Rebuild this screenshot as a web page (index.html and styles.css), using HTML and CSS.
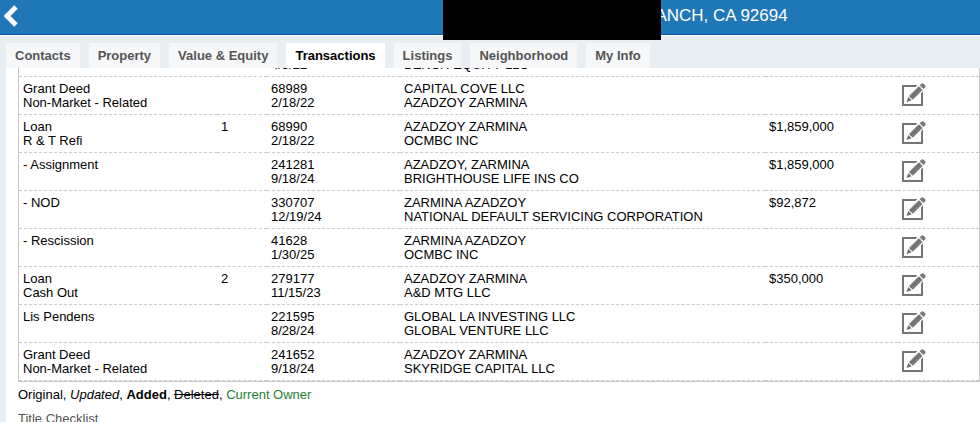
FILE: index.html
```html
<!DOCTYPE html>

<html lang="en">

  <head>

    <meta charset="utf-8">
    <title>Transactions</title>

    <link rel="stylesheet" href="styles.css">

  </head>

  <body>

    <!--ICON SHARED BY ALL THE ROWS-->

    <svg class="sprite" aria-hidden="true">
      <symbol id="edit" viewBox="0 0 25 24">
        <path d="M15 3 H1 V22 H20 V8" fill="none" stroke="#757575" stroke-width="2"/>
        <path d="M3.5 20.5 L6 12 L15.5 2 L22 7 L12 18.5 Z" fill="#fff"/>
        <path d="M4.5 19 L6.3 14 L9.6 17.3 Z" fill="#6b6b6b"/>
        <path d="M7 13 L16.8 3.2 L20.6 7 L10.8 16.8 Z" fill="#7b7b7b"/>
        <path d="M8.5 14.5 L18.5 4.7" stroke="#666" stroke-width="1"/>
        <path d="M17.7 2.3 L19.3 0.7 Q20.5 -0.3 21.8 0.9 L23 2.1 Q24 3.3 23 4.6 L21.5 6.1 Z" fill="#777"/>
      </symbol>
    </svg>

    <header class="topBar">
      <button class="backButton" aria-label="Back">
        <svg width="14" height="22" viewBox="0 0 14 22">
          <path d="M12 2 L3 11 L12 20" fill="none" stroke="#fff" stroke-width="5"/>
        </svg>
      </button>
      <div class="address">
        <span class="hiddenPart"></span>
        <span class="city">ANCH, CA 92694</span>
      </div>
    </header>

    <nav class="tabs">
      <a class="tab" href="#">Contacts</a>
      <a class="tab" href="#">Property</a>
      <a class="tab" href="#">Value &amp; Equity</a>
      <a class="tab activeTab" href="#">Transactions</a>
      <a class="tab" href="#">Listings</a>
      <a class="tab" href="#">Neighborhood</a>
      <a class="tab" href="#">My Info</a>
    </nav>

    <main class="content">

      <table class="transactions">
        <colgroup>
          <col class="typeCol">
          <col class="loanCol">
          <col class="docCol">
          <col>
          <col class="amountCol">
          <col class="editCol">
        </colgroup>
        <tbody>
          <tr>
            <td></td>
            <td></td>
            <td><br>4/5/22</td>
            <td><br>BENCH EQUITY LLC</td>
            <td></td>
            <td><button class="editButton" aria-label="Edit"><svg width="25" height="24"><use href="#edit"/></svg></button></td>
          </tr>
          <tr>
            <td>Grant Deed<br>Non-Market - Related</td>
            <td></td>
            <td>68989<br>2/18/22</td>
            <td>CAPITAL COVE LLC<br>AZADZOY ZARMINA</td>
            <td></td>
            <td><button class="editButton" aria-label="Edit"><svg width="25" height="24"><use href="#edit"/></svg></button></td>
          </tr>
          <tr>
            <td>Loan<br>R &amp; T Refi</td>
            <td>1</td>
            <td>68990<br>2/18/22</td>
            <td>AZADZOY ZARMINA<br>OCMBC INC</td>
            <td>$1,859,000</td>
            <td><button class="editButton" aria-label="Edit"><svg width="25" height="24"><use href="#edit"/></svg></button></td>
          </tr>
          <tr>
            <td>- Assignment</td>
            <td></td>
            <td>241281<br>9/18/24</td>
            <td>AZADZOY, ZARMINA<br>BRIGHTHOUSE LIFE INS CO</td>
            <td>$1,859,000</td>
            <td><button class="editButton" aria-label="Edit"><svg width="25" height="24"><use href="#edit"/></svg></button></td>
          </tr>
          <tr>
            <td>- NOD</td>
            <td></td>
            <td>330707<br>12/19/24</td>
            <td>ZARMINA AZADZOY<br>NATIONAL DEFAULT SERVICING CORPORATION</td>
            <td>$92,872</td>
            <td><button class="editButton" aria-label="Edit"><svg width="25" height="24"><use href="#edit"/></svg></button></td>
          </tr>
          <tr>
            <td>- Rescission</td>
            <td></td>
            <td>41628<br>1/30/25</td>
            <td>ZARMINA AZADZOY<br>OCMBC INC</td>
            <td></td>
            <td><button class="editButton" aria-label="Edit"><svg width="25" height="24"><use href="#edit"/></svg></button></td>
          </tr>
          <tr>
            <td>Loan<br>Cash Out</td>
            <td>2</td>
            <td>279177<br>11/15/23</td>
            <td>AZADZOY ZARMINA<br>A&amp;D MTG LLC</td>
            <td>$350,000</td>
            <td><button class="editButton" aria-label="Edit"><svg width="25" height="24"><use href="#edit"/></svg></button></td>
          </tr>
          <tr>
            <td>Lis Pendens</td>
            <td></td>
            <td>221595<br>8/28/24</td>
            <td>GLOBAL LA INVESTING LLC<br>GLOBAL VENTURE LLC</td>
            <td></td>
            <td><button class="editButton" aria-label="Edit"><svg width="25" height="24"><use href="#edit"/></svg></button></td>
          </tr>
          <tr>
            <td>Grant Deed<br>Non-Market - Related</td>
            <td></td>
            <td>241652<br>9/18/24</td>
            <td>AZADZOY ZARMINA<br>SKYRIDGE CAPITAL LLC</td>
            <td></td>
            <td><button class="editButton" aria-label="Edit"><svg width="25" height="24"><use href="#edit"/></svg></button></td>
          </tr>
        </tbody>
      </table>

      <p class="legend">Original, <em>Updated</em>, <strong>Added</strong>, <del>Deleted</del>, <span class="owner">Current Owner</span></p>

      <p class="checklist">Title Checklist</p>

    </main>

  </body>

</html>
```
FILE: styles.css
```css
* {
  box-sizing: border-box;
}

body {
  display: flex;
  flex-direction: column;
  height: 100vh;
  margin: 0;
  overflow: hidden;
  font-family: "Liberation Sans", Arial, Helvetica, sans-serif;
  font-size: 13px;
  line-height: 14px;
  color: black;
  background-color: #e9eef2;
}

.sprite {
  position: absolute;
  width: 0;
  height: 0;
}

/* Blue bar with the address */
.topBar {
  display: flex;
  flex: none;
  height: 36px;
  background-color: #1f77b8;
  border-bottom: 1px solid white;
  box-shadow: inset 0 -1px #0d5c9e;
}

.backButton {
  width: 22px;
  height: 31px;
  padding: 0 0 0 4px;
  border: none;
  background: none;
  cursor: pointer;
}

.backButton svg {
  display: block;
}

.address {
  display: flex;
  flex: 1;
  padding-left: 43%;
  font-size: 17px;
  line-height: 31px;
  color: white;
}

/* Covers the start of the address */
.hiddenPart {
  position: relative;
  z-index: 1;
  flex: none;
  width: 218px;
  height: 40px;
  background-color: black;
}

.city {
  margin-left: -6px;
  white-space: nowrap;
}

.tabs {
  display: flex;
  flex: none;
  gap: 9px;
  padding: 7px 6px 0;
}

.tab {
  padding: 0 9px;
  line-height: 25px;
  font-weight: bold;
  color: #555;
  text-decoration: none;
  white-space: nowrap;
  background-color: #f5f7f9;
}

.activeTab {
  color: black;
  background-color: white;
}

/* Scrolled area, the first row is cut by the tabs */
.content {
  flex: 1;
  min-height: 0;
  margin-left: 6px;
  padding-left: 12px;
  overflow: hidden;
  background-color: white;
}

.transactions {
  width: 100%;
  margin-top: -30px;
  table-layout: fixed;
  border-collapse: separate;
  border-spacing: 0;
  border: 1px solid #c8c8c8;
}

.typeCol {
  width: 198px;
}

.loanCol {
  width: 50px;
}

.docCol,
.amountCol {
  width: 133px;
}

.editCol {
  width: 81px;
}

.transactions td {
  height: 38px;
  padding: 5px 0 4px 4px;
  vertical-align: top;
  white-space: nowrap;
  border-bottom: 1px dashed #ccc;
}

.editButton {
  display: block;
  margin-top: 1px;
  padding: 0;
  border: none;
  background: none;
  cursor: pointer;
}

.editButton svg {
  display: block;
}

.legend {
  margin: 6px 0 10px;
}

.owner {
  color: #1e8232;
}

.checklist {
  margin: 0;
  color: #555;
}
```
